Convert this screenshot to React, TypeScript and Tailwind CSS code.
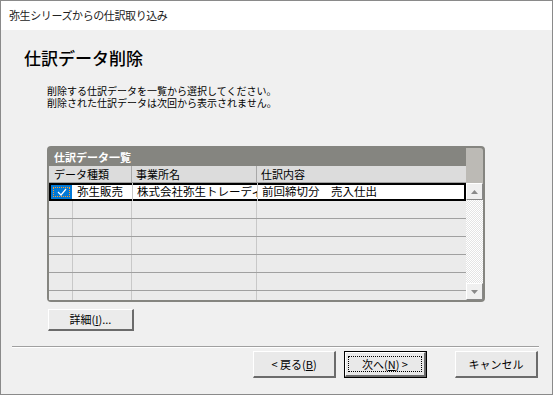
import React from "react";

const FONT = { fontFamily: '"Noto Sans CJK JP", "Noto Sans", sans-serif' };

// column x boundaries inside the list: 0-24 check, 24-83 type, 83-208 office, 208- content
const EMPTY_ROWS = [0, 1, 2, 3, 4];

function Check() {
  return (
    <div className="relative w-[21px] h-[14px] bg-[#0078d7] flex items-center justify-center">
      <div className="absolute inset-[2px] border border-dotted border-[#ff9c2a]" />
      <svg width="10" height="8" viewBox="0 0 10 8">
        <polyline points="1,4 4,7 9,1" fill="none" stroke="#fff" strokeWidth="1.2" />
      </svg>
    </div>
  );
}

function WinButton({ children, wide, isDefault }: { children: React.ReactNode; wide: number; isDefault?: boolean }) {
  return (
    <div
      className={`h-[27px] flex ${isDefault ? "border border-black" : ""}`}
      style={{ width: wide }}
    >
      <div className="relative flex-1 flex items-center justify-center bg-[#e9e9e9] border-t border-l border-white border-r-2 border-b-2 border-r-[#6b6b6b] border-b-[#6b6b6b] text-[11px] text-black">
        {isDefault && <div className="absolute inset-x-[2px] inset-y-[3px] border border-dotted border-black" />}
        {children}
      </div>
    </div>
  );
}

export default function App() {
  return (
    <div
      className="w-[553px] h-[395px] border border-[#8a8a8a] bg-[#f0f0f0] flex flex-col overflow-hidden"
      style={FONT}
    >
      {/* title bar */}
      <div className="h-[29px] bg-white flex items-center pl-[8px] text-[11px] text-[#222] tracking-[-0.4px]">
        弥生シリーズからの仕訳取り込み
      </div>

      <div className="flex-1 flex flex-col">
        <h1 className="mt-[17px] ml-[23px] text-[17px] leading-[22px] font-medium text-black">仕訳データ削除</h1>

        <div className="mt-[16px] ml-[46px] text-[10px] leading-[12px] text-black">
          <p>削除する仕訳データを一覧から選択してください。</p>
          <p>削除された仕訳データは次回から表示されません。</p>
        </div>

        {/* list panel */}
        <div className="mt-[37px] ml-[46px] w-[438px] h-[156px] bg-[#858580] rounded-[4px] flex p-[2px]">
          <div className="w-[417px] flex flex-col overflow-hidden">
            <div className="h-[18px] flex items-center pl-[5px] text-[11px] font-bold text-white">仕訳データ一覧</div>
            <div className="h-[17px] bg-[#dcdcdc] flex text-[11px] text-black border-b border-[#a0a0a0]">
              <div className="w-[83px] shrink-0 pl-[5px] flex items-center border-r border-[#a8a8a8]">データ種類</div>
              <div className="w-[125px] shrink-0 pl-[4px] flex items-center border-r border-[#a8a8a8]">事業所名</div>
              <div className="flex-1 pl-[4px] flex items-center">仕訳内容</div>
            </div>
            <div className="h-[18px] bg-white border-2 border-black flex items-center text-[11.5px] text-black">
              <div className="w-[22px] shrink-0 flex items-center">
                <Check />
              </div>
              <div className="w-[59px] shrink-0 pl-[4px] whitespace-nowrap">弥生販売</div>
              <div className="w-[125px] shrink-0 pl-[4px] whitespace-nowrap overflow-hidden border-l border-[#c8c8c8]">株式会社弥生トレーディング</div>
              <div className="flex-1 pl-[4px] whitespace-nowrap border-l border-[#c8c8c8]">前回締切分　売入仕出</div>
            </div>
            <div className="flex-1 bg-[#ebebeb] flex flex-col">
              {EMPTY_ROWS.map((r) => (
                <div key={r} className="h-[18px] shrink-0 flex border-b border-[#a0a0a0]">
                  <div className="w-[24px] border-r border-[#c8c8c8]" />
                  <div className="w-[59px] border-r border-[#c8c8c8]" />
                  <div className="w-[125px] border-r border-[#c8c8c8]" />
                  <div className="flex-1" />
                </div>
              ))}
              <div className="flex-1 flex">
                <div className="w-[24px] border-r border-[#c8c8c8]" />
                <div className="w-[59px] border-r border-[#c8c8c8]" />
                <div className="w-[125px] border-r border-[#c8c8c8]" />
                <div className="flex-1" />
              </div>
            </div>
          </div>

          {/* scrollbar */}
          <div className="w-[17px] flex flex-col">
            <div className="h-[35px] bg-[#bcbab5] rounded-tr-[3px]" />
            <div className="h-[17px] bg-[#f0f0f0] border-t border-l border-white border-r border-b border-r-[#888] border-b-[#888] flex items-center justify-center">
              <svg width="7" height="4" viewBox="0 0 7 4"><polygon points="0,4 7,4 3.5,0" fill="#8a8a8a" /></svg>
            </div>
            <div className="flex-1 bg-[repeating-conic-gradient(#e4e4e4_0_25%,#ffffff_0_50%)] bg-[length:2px_2px]" />
            <div className="h-[17px] bg-[#f0f0f0] border-t border-l border-white border-r border-b border-r-[#888] border-b-[#888] flex items-center justify-center">
              <svg width="7" height="4" viewBox="0 0 7 4"><polygon points="0,0 7,0 3.5,4" fill="#8a8a8a" /></svg>
            </div>
          </div>
        </div>

        {/* details */}
        <div className="mt-[7px] ml-[47px] w-[86px] h-[22px] bg-[#ebebeb] border-t border-l border-white border-r-2 border-b-2 border-r-[#6b6b6b] border-b-[#6b6b6b] flex items-center justify-center text-[11px] text-black">
          詳細(<span className="underline">I</span>)...
        </div>

        {/* separator */}
        <div className="mt-[15px] ml-[11px] w-[527px] border-t border-[#a0a0a0] border-b border-b-white" />

        {/* buttons */}
        <div className="mt-[3px] flex justify-end pr-[14px]">
          <WinButton wide={83}>
            &lt; 戻る(<span className="underline">B</span>)
          </WinButton>
          <div className="w-[8px]" />
          <WinButton wide={83} isDefault>
            次へ(<span className="underline">N</span>) &gt;
          </WinButton>
          <div className="w-[28px]" />
          <WinButton wide={83}>キャンセル</WinButton>
        </div>
      </div>
    </div>
  );
}
